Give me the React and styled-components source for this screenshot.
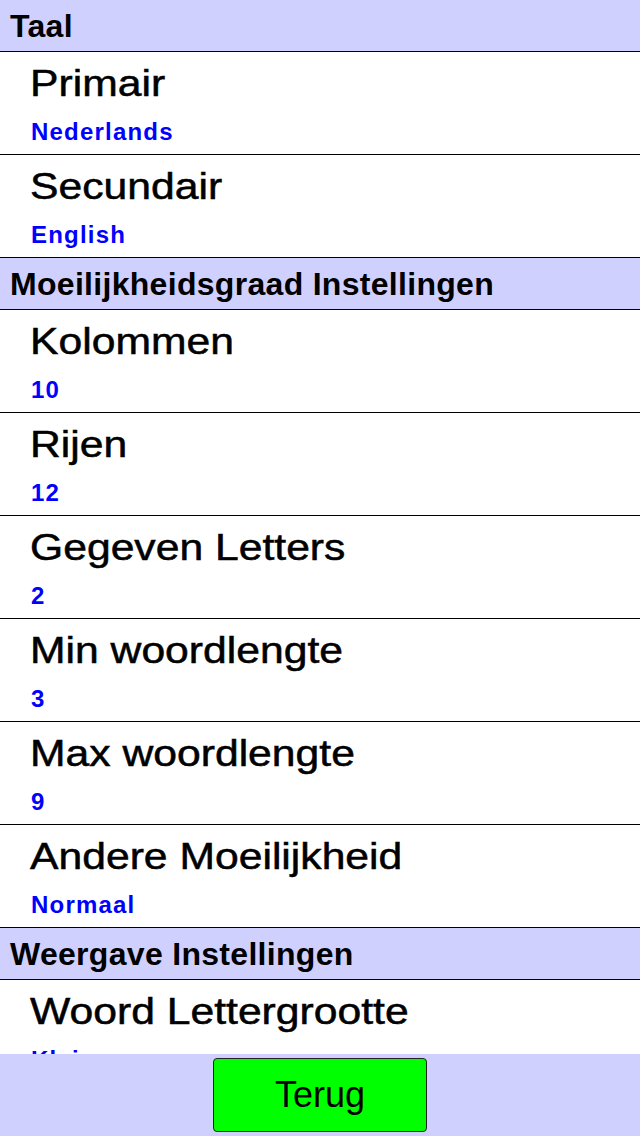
import React from "react";
import styled, { createGlobalStyle } from "styled-components";

const Global = createGlobalStyle`
  html, body { margin: 0; padding: 0; background: #ffffff; }
  body { font-family: "Liberation Sans", Arial, sans-serif; }
  #root { height: 100vh; }
`;

const Screen = styled.div`
  display: flex;
  flex-direction: column;
  height: 1136px;
  width: 640px;
  overflow: hidden;
  background: #ffffff;
`;

const List = styled.div`
  flex: 1;
  min-height: 0;
  overflow: hidden;
`;

const SectionHeader = styled.div`
  height: 52px;
  box-sizing: border-box;
  line-height: 52px;
  background: #d0d0ff;
  border-bottom: 1px solid #000000;
  padding-left: 10px;
  font-size: 32px;
  font-weight: 700;
  letter-spacing: 0.3px;
  color: #000000;
  white-space: nowrap;
  overflow: hidden;
`;

const Row = styled.div`
  height: 103px;
  box-sizing: border-box;
  border-bottom: 1px solid #000000;
  padding: 12px 0 0 30px;
  display: flex;
  flex-direction: column;
  align-items: flex-start;
`;

const Title = styled.span`
  display: inline-block;
  font-size: 36px;
  line-height: 40px;
  color: #000000;
  white-space: nowrap;
  -webkit-text-stroke: 0.5px #000000;
  transform: scaleX(1.185);
  transform-origin: left center;
`;

const Value = styled.span`
  display: inline-block;
  margin: 14px 0 0 1px;
  font-size: 24px;
  line-height: 28px;
  font-weight: 700;
  letter-spacing: 1.2px;
  color: #0000ff;
  white-space: nowrap;
`;

const Footer = styled.div`
  flex: 0 0 82px;
  background: #d0d0ff;
  display: flex;
  justify-content: center;
  align-items: flex-start;
  padding-top: 4px;
  box-sizing: border-box;
`;

const BackButton = styled.button`
  width: 214px;
  height: 74px;
  background: #00ff00;
  border: 1px solid #222222;
  border-radius: 4px;
  font-family: "Liberation Sans", Arial, sans-serif;
  font-size: 36px;
  line-height: 40px;
  color: #000000;
  padding: 0;
  cursor: pointer;
`;

const sections = [
  {
    title: "Taal",
    items: [
      { label: "Primair", value: "Nederlands" },
      { label: "Secundair", value: "English" },
    ],
  },
  {
    title: "Moeilijkheidsgraad Instellingen",
    items: [
      { label: "Kolommen", value: "10" },
      { label: "Rijen", value: "12" },
      { label: "Gegeven Letters", value: "2" },
      { label: "Min woordlengte", value: "3" },
      { label: "Max woordlengte", value: "9" },
      { label: "Andere Moeilijkheid", value: "Normaal" },
    ],
  },
  {
    title: "Weergave Instellingen",
    items: [{ label: "Woord Lettergrootte", value: "Klein" }],
  },
];

export default function App() {
  return (
    <>
      <Global />
      <Screen>
        <List>
          {sections.map((s) => (
            <React.Fragment key={s.title}>
              <SectionHeader>{s.title}</SectionHeader>
              {s.items.map((it) => (
                <Row key={it.label}>
                  <Title>{it.label}</Title>
                  <Value>{it.value}</Value>
                </Row>
              ))}
            </React.Fragment>
          ))}
        </List>
        <Footer>
          <BackButton>Terug</BackButton>
        </Footer>
      </Screen>
    </>
  );
}
